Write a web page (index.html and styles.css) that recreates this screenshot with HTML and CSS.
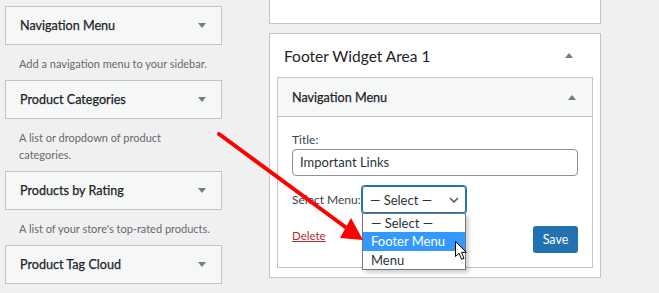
FILE: index.html
```html
<!DOCTYPE html>
<html>
<head>
<meta charset="utf-8">
<link rel="stylesheet" href="styles.css">
</head>
<body>
<div class="page">
  <div class="left">
    <div class="wbox"><span class="wtitle">Navigation Menu</span><i class="tri-down"></i></div>
    <p class="desc">Add a navigation menu to your sidebar.</p>
    <div class="wbox"><span class="wtitle">Product Categories</span><i class="tri-down"></i></div>
    <p class="desc">A list or dropdown of product<br>categories.</p>
    <div class="wbox"><span class="wtitle">Products by Rating</span><i class="tri-down"></i></div>
    <p class="desc">A list of your store's top-rated products.</p>
    <div class="wbox"><span class="wtitle">Product Tag Cloud</span><i class="tri-down"></i></div>
  </div>
  <div class="right">
    <div class="card top-card"></div>
    <div class="card area">
      <div class="area-head"><h2 class="area-title">Footer Widget Area 1</h2><i class="tri-up"></i></div>
      <div class="widget">
        <div class="widget-head"><span class="wtitle">Navigation Menu</span><i class="tri-up"></i></div>
        <div class="widget-body">
          <label class="lbl">Title:</label>
          <div class="input">Important Links</div>
          <div class="sel-row">
            <span class="lbl sel-lbl">Select Menu:</span>
            <div class="select">
              <span>— Select —</span>
              <svg class="chev" width="10" height="6" viewBox="0 0 10 6"><path d="M1 1l4 4 4-4" fill="none" stroke="#50575e" stroke-width="1.5"/></svg>
              <ul class="dropdown">
                <li>— Select —</li>
                <li class="hl">Footer Menu</li>
                <li>Menu</li>
              </ul>
            </div>
          </div>
          <div class="actions">
            <a class="delete">Delete</a>
            <span class="save">Save</span>
          </div>
        </div>
      </div>
    </div>
  </div>
  <svg class="arrow" width="659" height="293" viewBox="0 0 659 293">
    <line x1="219" y1="134" x2="348" y2="229" stroke="#ff0000" stroke-width="4" stroke-linecap="round"/>
    <polygon points="363,240 351,218 340,238" fill="#ff0000"/>
  </svg>
  <svg class="cursor" width="13" height="20" viewBox="0 0 13 20">
    <path d="M0.5 0.5 L0.5 15.5 L4 12.2 L6.6 18.3 L9 17.3 L6.5 11.3 L11.3 11.3 Z" fill="#fff" stroke="#000" stroke-width="1" stroke-linejoin="miter"/>
  </svg>
</div>
</body>
</html>
```
FILE: styles.css
```css
*{box-sizing:border-box}
html,body{margin:0;padding:0}
body{background:#f0f0f1;font-family:Lato,"Noto Sans",sans-serif;color:#1d2327;width:659px;height:293px;overflow:hidden}
.page{position:relative;display:flex;align-items:flex-start;width:659px;height:293px}
.left{width:217px;margin-left:5px;padding-top:6px;display:flex;flex-direction:column}
.wbox{height:39px;background:#f6f7f7;border:1px solid #c3c4c7;display:flex;align-items:center;justify-content:space-between;padding:0 14px 0 14px}
.wtitle{font-size:12.6px;font-weight:400;color:#1d2327;-webkit-text-stroke:0.25px #1d2327}
.tri-down{width:0;height:0;border-left:4px solid transparent;border-right:4px solid transparent;border-top:5px solid #787c82;margin-right:1px}
.tri-up{width:0;height:0;border-left:4px solid transparent;border-right:4px solid transparent;border-bottom:5px solid #787c82}
.desc{margin:0;padding:10px 0 8px 14px;font-size:11px;line-height:17px;color:#646970}
.right{margin-left:47px;width:332px;display:flex;flex-direction:column}
.card{background:#fff;border:1px solid #c3c4c7}
.top-card{height:24px;border-top:none}
.area{margin-top:9px;padding:0 7px 9px 7px}
.area-head{height:43px;display:flex;align-items:center;justify-content:space-between;padding:0 20px 0 7px}
.area-title{margin:0;font-size:15.5px;font-weight:400;color:#1d2327}
.widget{border:1px solid #c3c4c7;background:#fff}
.widget-head{height:39px;background:#f6f7f7;border-bottom:1px solid #c3c4c7;display:flex;align-items:center;justify-content:space-between;padding:0 16px 0 14px}
.widget-body{padding:15px 14px 14px 14px;display:flex;flex-direction:column}
.lbl{font-size:12px;line-height:16px;color:#3c434a}
.sel-lbl{flex:0 0 70px}
.input{margin-top:1px;height:27px;border:1px solid #8c8f94;border-radius:4px;padding:0 7px;font-size:13px;line-height:25px;color:#2c3338}
.sel-row{margin-top:10px;display:flex;align-items:center}
.select{position:relative;width:104px;height:27px;border:1px solid #2271b1;box-shadow:0 0 0 1px #2271b1;border-radius:3px;display:flex;align-items:center;justify-content:space-between;padding:0 6px 0 7px;font-size:13px;color:#2c3338}
.chev{margin-top:1px}
.dropdown{position:absolute;left:-1px;top:26px;width:104px;margin:0;padding:0;list-style:none;background:#fff;border:1px solid #767676;box-shadow:3px 3px 4px rgba(0,0,0,0.18);z-index:2}
.dropdown li{height:18.3px;line-height:18px;padding-left:8px;font-size:13px;color:#2c3338}
.dropdown li.hl{background:#3399ff;color:#fff}
.actions{margin-top:13px;display:flex;align-items:center;justify-content:space-between}
.delete{font-size:11.5px;color:#b32d2e;text-decoration:underline;margin-top:-9px}
.save{width:45px;height:27px;background:#2271b1;border-radius:3px;color:#fff;font-size:12.5px;display:flex;align-items:center;justify-content:center}
.arrow{position:absolute;left:0;top:0;pointer-events:none;z-index:3}
.cursor{position:absolute;left:455px;top:241px;z-index:4}
```
